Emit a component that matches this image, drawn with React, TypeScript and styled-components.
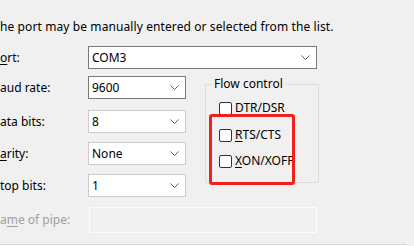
import React from "react";
import styled, { createGlobalStyle } from "styled-components";

const Global = createGlobalStyle`
  html, body { margin: 0; padding: 0; background: #f0f0f0; overflow: hidden; }
  body { font-family: "Noto Sans", "Liberation Sans", sans-serif; font-size: 12px; color: #000; }
`;

const Page = styled.div`
  position: relative;
  width: 414px;
  height: 246px;
  padding-top: 19px;
  box-sizing: border-box;
`;

const Intro = styled.div`
  line-height: 16px;
  white-space: nowrap;
  letter-spacing: 0.1px;
  margin-bottom: 11px;
`;

const Row = styled.div<{ $top?: number }>`
  display: flex;
  align-items: center;
  margin-top: ${(p) => p.$top ?? 0}px;
`;

const Label = styled.div<{ $disabled?: boolean }>`
  width: 88px;
  flex: none;
  line-height: 16px;
  white-space: nowrap;
  color: ${(p) => (p.$disabled ? "#a0a0a0" : "#000")};
`;

const Mn = styled.span`
  text-decoration: underline;
  text-underline-offset: 2px;
`;

const Combo = styled.div<{ $w: number; $dark?: boolean }>`
  width: ${(p) => p.$w}px;
  height: 23px;
  box-sizing: border-box;
  border: 1px solid ${(p) => (p.$dark ? "#7a7a7a" : "#cccccc")};
  background: #fff;
  display: flex;
  align-items: center;
  justify-content: space-between;
  padding: 0 6px 0 3px;
  line-height: 16px;
`;

const Chevron = () => (
  <svg width="9" height="5" viewBox="0 0 9 5">
    <polyline points="0.5,0.5 4.5,4.5 8.5,0.5" fill="none" stroke="#606060" strokeWidth="1" />
  </svg>
);

const Middle = styled.div`
  display: flex;
  align-items: flex-start;
  margin-top: 7px;
`;

const LeftCol = styled.div`
  display: flex;
  flex-direction: column;
`;

const Group = styled.fieldset`
  margin: 0 0 0 19px;
  padding: 0;
  width: 114px;
  height: 107px;
  box-sizing: border-box;
  border: 1px solid #dcdcdc;
  min-width: 0;
`;

const Legend = styled.legend`
  margin-left: 6px;
  padding: 0 2px;
  line-height: 16px;
`;

const CheckRow = styled.div<{ $top: number }>`
  display: flex;
  align-items: center;
  margin: ${(p) => p.$top}px 0 0 13px;
  line-height: 16px;
  white-space: nowrap;
`;

const Box = styled.span`
  width: 13px;
  height: 13px;
  box-sizing: border-box;
  border: 1px solid #333;
  border-radius: 2px;
  background: #fff;
  margin-right: 3px;
  flex: none;
`;

const Edit = styled.div`
  margin-left: 1px;
  width: 228px;
  height: 26px;
  box-sizing: border-box;
  border: 1px solid #fcfcfc;
  background: #f0f0f0;
`;

const Divider = styled.div`
  margin-top: 11px;
  width: 407px;
  border-top: 1px solid #d5d5d5;
  border-bottom: 1px solid #fff;
`;

const Highlight = styled.div`
  position: absolute;
  left: 209px;
  top: 114px;
  width: 86px;
  height: 71px;
  box-sizing: border-box;
  border: 3px solid #f0211d;
  border-radius: 3px;
`;

export default function App() {
  return (
    <Page>
      <Global />
      <Intro>he port may be manually entered or selected from the list.</Intro>
      <Row>
        <Label>
          <Mn>o</Mn>rt:
        </Label>
        <Combo $w={229} $dark>
          <span>COM3</span>
          <Chevron />
        </Combo>
      </Row>
      <Middle>
        <LeftCol>
          <Row>
            <Label>aud rate:</Label>
            <Combo $w={98} $dark>
              <span>9600</span>
              <Chevron />
            </Combo>
          </Row>
          <Row $top={11}>
            <Label>ata bits:</Label>
            <Combo $w={98}>
              <span>8</span>
              <Chevron />
            </Combo>
          </Row>
          <Row $top={9}>
            <Label>
              <Mn>a</Mn>rity:
            </Label>
            <Combo $w={98}>
              <span>None</span>
              <Chevron />
            </Combo>
          </Row>
          <Row $top={9}>
            <Label>top bits:</Label>
            <Combo $w={98}>
              <span>1</span>
              <Chevron />
            </Combo>
          </Row>
        </LeftCol>
        <Group>
          <Legend>Flow control</Legend>
          <CheckRow $top={8}>
            <Box />
            <span>
              D<Mn>T</Mn>R/DSR
            </span>
          </CheckRow>
          <CheckRow $top={11}>
            <Box />
            <span>
              <Mn>R</Mn>TS/CTS
            </span>
          </CheckRow>
          <CheckRow $top={10}>
            <Box />
            <span>
              <Mn>X</Mn>ON/XOFF
            </span>
          </CheckRow>
        </Group>
      </Middle>
      <Row $top={10}>
        <Label $disabled>
          a<Mn>m</Mn>e of pipe:
        </Label>
        <Edit />
      </Row>
      <Divider />
      <Highlight />
    </Page>
  );
}
